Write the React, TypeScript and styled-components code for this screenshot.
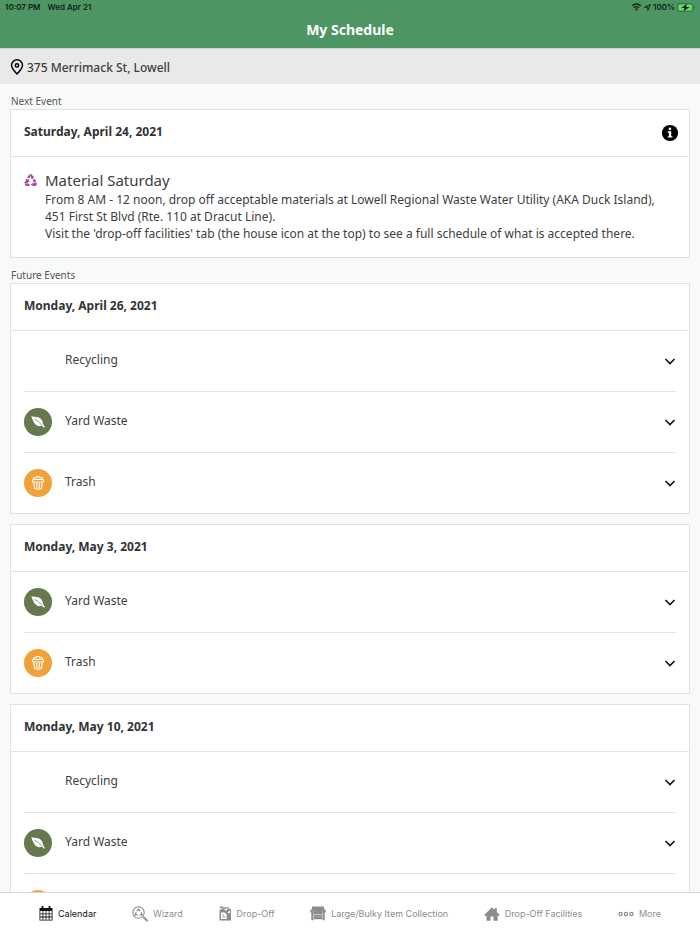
import React, { useState } from "react";
import styled, { createGlobalStyle, css } from "styled-components";

const GlobalStyle = createGlobalStyle`
  *, *::before, *::after { box-sizing: border-box; }
  body {
    margin: 0;
    background: #f8fafa;
    color: #404040;
    font-family: "Noto Sans", "Open Sans", sans-serif;
  }
  h1, h2, h3, p, ul { margin: 0; padding: 0; }
  button { font: inherit; color: inherit; background: none; border: 0; padding: 0; cursor: pointer; }
`;

const Screen = styled.div`
  display: flex;
  flex-direction: column;
  height: 100vh;
`;

const Header = styled.header`
  flex: none;
  background: #4d9562;
`;

const StatusBar = styled.div`
  display: flex;
  justify-content: space-between;
  align-items: center;
  height: 14px;
  padding: 0 5px;
  color: #10241a;
  font: 600 8px/14px Inter, sans-serif;
`;

const StatusGroup = styled.div<{ $gap: number }>`
  display: flex;
  align-items: center;
  gap: ${(p) => p.$gap}px;
`;

const Title = styled.h1`
  height: 34px;
  color: #fff;
  font-size: 14px;
  font-weight: 700;
  line-height: 32px;
  text-align: center;
`;

const AddressBar = styled.button`
  flex: none;
  display: flex;
  align-items: center;
  gap: 3px;
  width: 100%;
  height: 36px;
  padding: 1px 10px 0;
  background: #e9e9e9;
  border-top: 1px solid #cdd2cf;
  font-size: 12px;
  font-weight: 500;
  text-align: left;
`;

const Content = styled.main`
  flex: 1;
  min-height: 0;
  padding: 10px;
  overflow-y: auto;
  scrollbar-width: none;
`;

const SectionLabel = styled.h2`
  padding-left: 1px;
  color: #555;
  font-size: 10px;
  font-weight: 400;
  line-height: 15px;
`;

const Card = styled.section`
  margin-bottom: 10px;
  background: #fff;
  border: 1px solid #e0e2e2;
`;

const CardHead = styled.div`
  display: flex;
  align-items: center;
  justify-content: space-between;
  height: 47px;
  padding: 0 10px 0 13px;
  border-bottom: 1px solid #e2e4e4;
`;

const CardDate = styled.h3`
  padding-bottom: 3px;
  color: #333;
  font-size: 12px;
  font-weight: 700;
  line-height: 18px;
`;

const InfoButton = styled.button`
  display: flex;
`;

const Feature = styled.div`
  display: flex;
  align-items: flex-start;
  gap: 8px;
  padding: 14px 24px 15px 13px;
`;

const FeatureIcon = styled.div`
  flex: none;
  display: flex;
  padding-top: 3px;
`;

const FeatureTitle = styled.h3`
  margin-bottom: 2px;
  font-size: 15px;
  font-weight: 400;
  line-height: 18px;
`;

const FeatureText = styled.p`
  font-size: 12px;
  line-height: 17px;
`;

const Rows = styled.ul`
  padding: 0 13px;
  list-style: none;
`;

const Row = styled.li`
  & + & { border-top: 1px solid #e2e2e2; }
`;

const RowButton = styled.button`
  display: flex;
  align-items: center;
  gap: 13px;
  width: 100%;
  height: 60px;
  text-align: left;
`;

const Badge = styled.span<{ $color: string }>`
  display: flex;
  align-items: center;
  justify-content: center;
  width: 28px;
  height: 28px;
  border-radius: 50%;
  background: ${(p) => p.$color};
`;

const RowLabel = styled.span`
  flex: 1;
  padding-bottom: 3px;
  font-size: 12px;
  line-height: 18px;
`;

const Details = styled.p`
  padding: 0 0 16px 41px;
  font-size: 12px;
  line-height: 17px;
`;

const TabBar = styled.nav`
  flex: none;
  display: flex;
  align-items: center;
  justify-content: space-between;
  height: 42px;
  padding: 0 39px;
  background: #fff;
  border-top: 1px solid #d6d6d6;
`;

const Tab = styled.button<{ $active?: boolean }>`
  display: flex;
  align-items: center;
  gap: 5px;
  color: #8c8c8c;
  font: 400 9px/14px Inter, sans-serif;
  white-space: nowrap;
  ${(p) => p.$active && css`color: #111;`}
`;

const WifiIcon = () => (
  <svg width="11" height="8" viewBox="0 0 20 16" fill="none" stroke="currentColor" strokeWidth="3" aria-hidden="true">
    <path d="M1.500 5.500a12 12 0 0 1 17 0M4.800 9.500a7.400 7.400 0 0 1 10.400 0" />
    <path d="M7 12.200a4.200 4.200 0 0 1 6 0L10 15.500z" fill="currentColor" stroke="none" />
  </svg>
);

const LocationIcon = () => (
  <svg width="7" height="7" viewBox="0 0 14 14" fill="none" stroke="currentColor" strokeWidth="1.800" strokeLinejoin="round" aria-hidden="true">
    <path d="M13 1 1 6.500h6.500V13z" />
  </svg>
);

const BatteryIcon = () => (
  <svg width="18" height="9" viewBox="0 0 36 18" aria-hidden="true">
    <rect x="1" y="1" width="31" height="16" rx="5" fill="none" stroke="#2f6a40" strokeWidth="1.600" />
    <rect x="3" y="3" width="27" height="12" rx="3" fill="#67d66b" />
    <path d="M33.500 6v6q2-1 2-3t-2-3" fill="#2f6a40" />
    <path d="M20 1.500 8.500 10h6.500l-2 6.500L25 8h-7z" fill="#0c1b12" />
  </svg>
);

const PinIcon = () => (
  <svg width="14" height="16" viewBox="0 0 14 16" fill="none" stroke="#000" strokeWidth="1.500" aria-hidden="true">
    <path d="M7 15C5 12.500 1.500 9.800 1.500 6.300a5.500 5.500 0 0 1 11 0C12.500 9.800 9 12.500 7 15z" strokeLinejoin="round" />
    <circle cx="7" cy="6.400" r="1.700" />
  </svg>
);

const InfoIcon = () => (
  <svg width="18" height="18" viewBox="0 0 18 18" aria-hidden="true">
    <circle cx="9" cy="9" r="8.100" fill="#000" />
    <circle cx="8.900" cy="4.900" r="1.300" fill="#fff" />
    <path d="M6.800 7.300h3.400v4.900h1.200v1.400H6.700v-1.400h1.200V8.700H6.800z" fill="#fff" />
  </svg>
);

const MaterialIcon = () => (
  <svg width="13" height="12" viewBox="0 0 26 24" fill="#a746ad" aria-hidden="true">
    <path d="M10 .5h5.500L18 5l2-1-1.500 6-6-1.500 2-1L12.800 4z" />
    <path d="m9.500 2 3.500 2-2.500 5-4-2z" />
    <path d="m2.500 11 6.500-.8 2 6.300-2-.8-2.500 3.300H1L.8 18 4 12.500z" />
    <path d="M1.500 19.500H11V24H3.500z" />
    <path d="m17 12 4.500-2 3 5-4.500 2.200z" />
    <path d="m20.500 17.500 4.500-.5.800 3-2 4h-5L13 21.500l5.800-4.200v1.700z" />
  </svg>
);

const LeafIcon = () => (
  <svg width="16" height="16" viewBox="0 0 16 16" aria-hidden="true">
    <path d="M1.300 2.300C5 3 12.500 2 13 10l1.900 3-.8.700-2.300-1.900C6 13.800 3.500 8.500 1.300 2.300z" fill="#fff" />
    <path d="M4.500 5.200Q9 7 12 11.500" fill="none" stroke="#64794c" strokeWidth=".7" />
  </svg>
);

const TrashIcon = () => (
  <svg width="14" height="16" viewBox="0 0 14 16" fill="none" stroke="#fff" strokeWidth="1.200" strokeLinejoin="round" aria-hidden="true">
    <path d="M2.300 4.800 2.800 3l2-.5L6 1.500h2l1.200 1 2 .5.500 1.800M4.900 4.300h4.200" />
    <rect x="1.500" y="4.500" width="11" height="2.500" rx="1" />
    <path d="m2.800 7.500.8 6q3.400 1.200 6.800 0l.8-6M5.600 8l.3 5M8.400 8l-.3 5" />
  </svg>
);

const Chevron = () => (
  <svg width="12" height="8" viewBox="0 0 12 8" fill="none" stroke="#111" strokeWidth="1.600" aria-hidden="true">
    <path d="m1.500 2 4.500 4.500L10.500 2" />
  </svg>
);

const CalendarIcon = () => (
  <svg width="14" height="15" viewBox="0 0 14 15" aria-hidden="true">
    <path d="M.5 2h13v12.500H.5z" fill="currentColor" />
    <path d="M3.500 0v3M10.500 0v3" stroke="currentColor" strokeWidth="1.800" />
    <path
      d="M1.300 5h2.200v2.400H1.300zM4.300 5h2.300v2.400H4.300zM7.400 5h2.300v2.400H7.400zM10.500 5h2.200v2.400h-2.200zM1.300 8.200h2.200v2.400H1.300zM4.300 8.200h2.300v2.400H4.300zM7.400 8.200h2.300v2.400H7.400zM10.500 8.200h2.200v2.400h-2.200zM1.300 11.400h2.200v2.300H1.300zM4.300 11.400h2.300v2.300H4.300zM7.400 11.400h2.300v2.300H7.400zM10.500 11.400h2.200v2.300h-2.200z"
      fill="#fff"
    />
  </svg>
);

const WizardIcon = () => (
  <svg width="16" height="16" viewBox="0 0 16 16" fill="none" stroke="currentColor" aria-hidden="true">
    <circle cx="6.500" cy="6.500" r="5.700" strokeWidth="1.100" />
    <path d="M4.800 5.200 6.500 3l1.700 2.200M9 6.200l1 2.600H7.500M5.800 8.800H3.200l1-2.600" strokeWidth="1.300" />
    <path d="m10.500 10.500 1.500 1.200" />
    <path d="m12 11.800 3 2.700" strokeWidth="1.900" strokeLinecap="round" />
  </svg>
);

const DropOffIcon = () => (
  <svg width="13" height="15" viewBox="0 0 13 15" aria-hidden="true">
    <path d="M.5 4 3 3l2-1.500L9 1l3 3v10.500H.5z" fill="currentColor" />
    <path d="M.8.500h3.700v1.800H.8z" fill="currentColor" />
    <path d="m5 3.800 2.500-1.600h2L7 4.800z" fill="#fff" />
    <path d="M2 6.500h4l1.600 2V13H2z" fill="#fff" />
    <path d="M3.200 9h2M3.200 11h3.200" stroke="currentColor" strokeWidth=".9" />
    <path d="m8 6.500 3.300-3Q13 6 10 8z" fill="#fff" stroke="currentColor" strokeWidth="1" />
  </svg>
);

const ArmchairIcon = () => (
  <svg width="16" height="15" viewBox="0 0 16 15" fill="currentColor" aria-hidden="true">
    <path d="M2 .5h12V4H2zM.3 3.500h3.200v3H.3zM12.500 3.500h3.200v3h-3.200zM3.800 4h8.400v4.300H3.800zM1.300 6h2.200v8.300H1.300zM12.500 6h2.200v8.300h-2.200zM4 8.700h8v1.700H4zM4 10.800h8v2.500H4z" />
  </svg>
);

const HouseIcon = () => (
  <svg width="16" height="14" viewBox="0 0 16 14" fill="currentColor" aria-hidden="true">
    <path d="M8 .3 10.700 3V1h2.100v4l3 3-.8.800h-1.300v5H9.500V9.500h-3v4.300h-4v-5H1L.2 8z" />
  </svg>
);

const MoreIcon = () => (
  <svg width="16" height="6" viewBox="0 0 16 6" fill="none" stroke="currentColor" strokeWidth="1.200" aria-hidden="true">
    <circle cx="2.500" cy="3" r="1.600" />
    <circle cx="8" cy="3" r="1.600" />
    <circle cx="13.500" cy="3" r="1.600" />
  </svg>
);

type Kind = "Recycling" | "Yard Waste" | "Trash";

const badges: Record<Kind, { color: string; icon: React.ReactNode }> = {
  Recycling: { color: "transparent", icon: null },
  "Yard Waste": { color: "#64794c", icon: <LeafIcon /> },
  Trash: { color: "#f0a13a", icon: <TrashIcon /> },
};

const days: { date: string; events: Kind[] }[] = [
  { date: "Monday, April 26, 2021", events: ["Recycling", "Yard Waste", "Trash"] },
  { date: "Monday, May 3, 2021", events: ["Yard Waste", "Trash"] },
  { date: "Monday, May 10, 2021", events: ["Recycling", "Yard Waste", "Trash"] },
];

const tabs = [
  { label: "Calendar", icon: <CalendarIcon /> },
  { label: "Wizard", icon: <WizardIcon /> },
  { label: "Drop-Off", icon: <DropOffIcon /> },
  { label: "Large/Bulky Item Collection", icon: <ArmchairIcon /> },
  { label: "Drop-Off Facilities", icon: <HouseIcon /> },
  { label: "More", icon: <MoreIcon /> },
];

function EventRow({ kind, date }: { kind: Kind; date: string }) {
  const [open, setOpen] = useState(false);
  const badge = badges[kind];
  return (
    <Row>
      <RowButton type="button" aria-expanded={open} onClick={() => setOpen(!open)}>
        <Badge $color={badge.color}>{badge.icon}</Badge>
        <RowLabel>{kind}</RowLabel>
        <Chevron />
      </RowButton>
      {open && <Details>{date}</Details>}
    </Row>
  );
}

export default function App() {
  const [active, setActive] = useState("Calendar");
  return (
    <Screen>
      <GlobalStyle />
      <Header>
        <StatusBar>
          <StatusGroup $gap={7}>
            <span>10:07 PM</span>
            <span>Wed Apr 21</span>
          </StatusGroup>
          <StatusGroup $gap={2}>
            <WifiIcon />
            <LocationIcon />
            <span>100%</span>
            <BatteryIcon />
          </StatusGroup>
        </StatusBar>
        <Title>My Schedule</Title>
      </Header>
      <AddressBar type="button">
        <PinIcon />
        375 Merrimack St, Lowell
      </AddressBar>
      <Content>
        <SectionLabel>Next Event</SectionLabel>
        <Card>
          <CardHead>
            <CardDate>Saturday, April 24, 2021</CardDate>
            <InfoButton type="button" aria-label="Information">
              <InfoIcon />
            </InfoButton>
          </CardHead>
          <Feature>
            <FeatureIcon>
              <MaterialIcon />
            </FeatureIcon>
            <div>
              <FeatureTitle>Material Saturday</FeatureTitle>
              <FeatureText>
                From 8 AM - 12 noon, drop off acceptable materials at Lowell Regional Waste Water Utility (AKA Duck
                Island), 451 First St Blvd (Rte. 110 at Dracut Line).
              </FeatureText>
              <FeatureText>
                Visit the 'drop-off facilities' tab (the house icon at the top) to see a full schedule of what is
                accepted there.
              </FeatureText>
            </div>
          </Feature>
        </Card>
        <SectionLabel>Future Events</SectionLabel>
        {days.map((day) => (
          <Card key={day.date}>
            <CardHead>
              <CardDate>{day.date}</CardDate>
            </CardHead>
            <Rows>
              {day.events.map((kind) => (
                <EventRow key={kind} kind={kind} date={day.date} />
              ))}
            </Rows>
          </Card>
        ))}
      </Content>
      <TabBar>
        {tabs.map((tab) => (
          <Tab
            key={tab.label}
            type="button"
            $active={tab.label === active}
            aria-current={tab.label === active ? "page" : undefined}
            onClick={() => setActive(tab.label)}
          >
            {tab.icon}
            {tab.label}
          </Tab>
        ))}
      </TabBar>
    </Screen>
  );
}
